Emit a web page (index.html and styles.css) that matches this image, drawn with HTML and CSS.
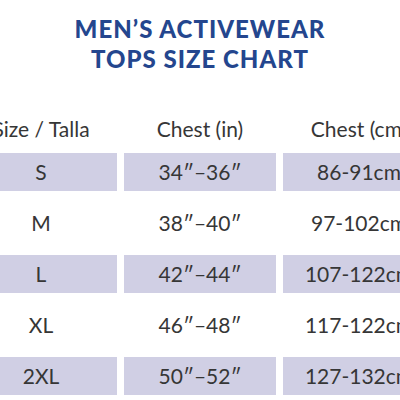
FILE: index.html
```html
<!DOCTYPE html>
<html lang="en">
<head>
  <meta charset="utf-8"/>
  <title>Men's Activewear Tops Size Chart</title>
  <link rel="stylesheet" href="styles.css">
</head>
<body>
  <h1 class="titulo">MEN’S ACTIVEWEAR<br>TOPS SIZE CHART</h1>

  <div class="tabla">
    <div class="fila cabecera">
      <div class="celda">Size / Talla</div>
      <div class="celda">Chest (in)</div>
      <div class="celda">Chest (cm)</div>
    </div>
    <div class="cuerpo">
      <div class="fila sombra">
        <div class="celda">S</div>
        <div class="celda">34″–36″</div>
        <div class="celda">86-91cm</div>
      </div>
      <div class="fila">
        <div class="celda">M</div>
        <div class="celda">38″–40″</div>
        <div class="celda">97-102cm</div>
      </div>
      <div class="fila sombra">
        <div class="celda">L</div>
        <div class="celda">42″–44″</div>
        <div class="celda">107-122cm</div>
      </div>
      <div class="fila">
        <div class="celda">XL</div>
        <div class="celda">46″–48″</div>
        <div class="celda">117-122cm</div>
      </div>
      <div class="fila sombra">
        <div class="celda">2XL</div>
        <div class="celda">50″–52″</div>
        <div class="celda">127-132cm</div>
      </div>
    </div>
  </div>
</body>
</html>
```

FILE: styles.css
```css
body {
  margin: 0;
  background: #fff;
  font-family: Lato, "Open Sans", sans-serif;
  overflow: hidden;
}
.titulo {
  margin: 14px 0 0;
  text-align: center;
  font-size: 24px;
  line-height: 30px;
  font-weight: 900;
  color: #24468e;
  letter-spacing: 1px;
}
.tabla {
  margin-top: 36px;
  display: flex;
  flex-direction: column;
  align-items: center;
}
.cuerpo {
  display: flex;
  flex-direction: column;
  gap: 13px;
}
.fila {
  display: grid;
  grid-template-columns: 152px 152px 152px;
  column-gap: 7px;
}
.cabecera {
  margin-bottom: 5px;
}
.celda {
  height: 38px;
  line-height: 38px;
  text-align: center;
  font-size: 21px;
  color: #363636;
  white-space: nowrap;
}
.sombra .celda {
  background: #d0cfe4;
}
```
